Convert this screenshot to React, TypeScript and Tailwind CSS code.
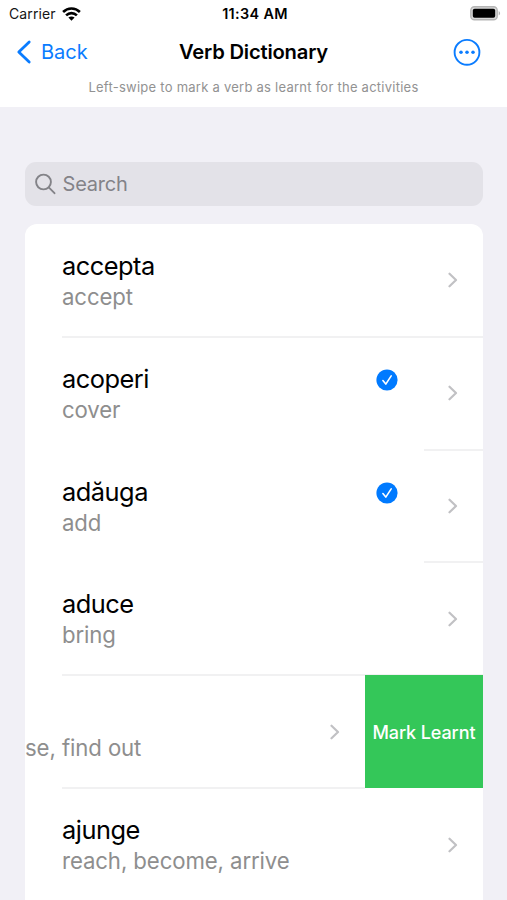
import clsx from 'clsx';

interface Verb {
  infinitive: string;
  meaning: string;
  learnt?: boolean;
  swiped?: boolean;
  divider: 'full' | 'short' | 'none';
}

const verbs: Verb[] = [
  { infinitive: 'accepta', meaning: 'accept', divider: 'full' },
  { infinitive: 'acoperi', meaning: 'cover', learnt: true, divider: 'short' },
  { infinitive: 'adăuga', meaning: 'add', learnt: true, divider: 'short' },
  { infinitive: 'aduce', meaning: 'bring', divider: 'full' },
  { infinitive: '', meaning: 'se, find out', swiped: true, divider: 'full' },
  { infinitive: 'ajunge', meaning: 'reach, become, arrive', divider: 'none' },
];

function WifiIcon() {
  return (
    <svg width="19" height="14" viewBox="0 0 19 14" fill="none" stroke="#000" strokeWidth="2.6">
      <path d="M1.1 5C5.8 .4 13.2 .4 17.9 5" />
      <path d="M4.1 8.4C7.2 5.4 11.8 5.4 14.9 8.4" />
      <path d="M9.5 13.8L6.4 10.6C8.2 9.1 10.8 9.1 12.6 10.6Z" fill="#000" stroke="none" />
    </svg>
  );
}

function BatteryIcon() {
  return (
    <svg width="31" height="15" viewBox="0 0 31 15">
      <rect x=".8" y=".8" width="26.4" height="13" rx="3.6" fill="#d9d9d9" stroke="#b5b5b5" strokeWidth="1.4" />
      <rect x="2.8" y="2.8" width="22.4" height="9" rx="1.8" fill="#000" />
      <path d="M28.7 5.1C30.6 5.9 30.6 8.7 28.7 9.5Z" fill="#b5b5b5" />
    </svg>
  );
}

function Chevron() {
  return (
    <svg width="10" height="16" viewBox="0 0 10 16" fill="none" stroke="#c1c1c4" strokeWidth="2.2" strokeLinecap="round" strokeLinejoin="round">
      <path d="M1.5 1.7L8 8L1.5 14.3" />
    </svg>
  );
}

function LearntBadge() {
  return (
    <svg width="22" height="22" viewBox="0 0 22 22" fill="none">
      <circle cx="11" cy="11" r="10.6" fill="#007aff" />
      <path d="M6.9 11.6L9.8 15.1L15.2 6.9" stroke="#fff" strokeWidth="1.6" strokeLinecap="round" strokeLinejoin="round" />
    </svg>
  );
}

function VerbRow({ verb }: { verb: Verb }) {
  return (
    <div className="flex h-[112.8px] flex-col">
      <div className="flex min-h-0 flex-1">
        <div className={clsx('flex min-w-0 flex-1', !verb.swiped && 'pl-[37px]')}>
          <div className="flex-1 whitespace-nowrap pt-[27px]">
            <div className="h-[31px] text-[25.4px] leading-[30px] tracking-[-0.5px] text-black">{verb.infinitive}</div>
            <div className="h-[30px] text-[22.2px] leading-[30px] tracking-[-0.1px] text-[#8e8e8e]">{verb.meaning}</div>
          </div>
          {verb.learnt && (
            <div className="mr-[50px] mt-[32px]">
              <LearntBadge />
            </div>
          )}
          <div className="flex items-center pr-[25px] pt-px">
            <Chevron />
          </div>
        </div>
        {verb.swiped && (
          <button className="-mb-px flex w-[118px] shrink-0 items-center justify-center whitespace-nowrap bg-[#34c759] pt-px text-[18px] font-medium tracking-[-0.1px] text-white">
            Mark Learnt
          </button>
        )}
      </div>
      {verb.divider !== 'none' && (
        <div
          className={clsx(
            '-mb-px h-[2px] shrink-0 bg-[#f1f1f2]',
            verb.divider === 'full' && 'ml-[37px]',
            verb.divider === 'short' && 'ml-[399px]',
            verb.swiped && 'mr-[118px]'
          )}
        />
      )}
    </div>
  );
}

export default function App() {
  return (
    <div className="flex h-[900px] w-[507px] flex-col overflow-hidden bg-[#f1f0f6] font-['Inter','Liberation_Sans',sans-serif]">
      <header className="flex h-[107px] shrink-0 flex-col bg-white">
        {/* Status bar */}
        <div className="grid h-[27px] grid-cols-[1fr_auto_1fr] items-center pl-[9px] pr-[6px] text-[14px] text-[#151515]">
          <div className="flex items-center gap-[6px]">
            <span className="tracking-[0.1px]">Carrier</span>
            <WifiIcon />
          </div>
          <div className="text-center text-[14.4px] font-semibold tracking-[0.35px] text-black">11:34 AM</div>
          <div className="flex justify-end">
            <BatteryIcon />
          </div>
        </div>

        {/* Navigation bar */}
        <div className="grid h-[50px] grid-cols-[1fr_auto_1fr] items-center px-[16px]">
          <button className="flex items-center gap-[9px] text-[20px] text-[#0a7cff]">
            <svg width="16" height="24" viewBox="0 0 16 24" fill="none" stroke="#0a7cff" strokeWidth="2.8" strokeLinecap="round" strokeLinejoin="round">
              <path d="M13.2 2L2.8 12L13.2 22" />
            </svg>
            <span>Back</span>
          </button>
          <h1 className="pt-px text-[20.2px] font-semibold tracking-[-0.2px] text-black">Verb Dictionary</h1>
          <button className="flex justify-end pr-[10px]" aria-label="More">
            <svg width="28" height="28" viewBox="0 0 28 28" fill="none">
              <circle cx="14" cy="14.3" r="12.4" stroke="#0a7cff" strokeWidth="1.9" />
              <circle cx="8" cy="14.3" r="1.75" fill="#0a7cff" />
              <circle cx="14" cy="14.3" r="1.75" fill="#0a7cff" />
              <circle cx="20" cy="14.3" r="1.75" fill="#0a7cff" />
            </svg>
          </button>
        </div>

        <p className="text-center text-[13px] leading-[20px] tracking-[0.25px] text-[#929292]">
          Left-swipe to mark a verb as learnt for the activities
        </p>
      </header>

      <main className="flex flex-col gap-[18px] pl-[25px] pr-[24px] pt-[55px]">
        <div className="flex h-[44px] items-center gap-[7px] rounded-[11px] bg-[#e3e2e8] pl-[9.5px] text-[20px] tracking-[-0.2px] text-[#838388]">
          <svg width="21" height="22" viewBox="0 0 21 22" fill="none" stroke="#838388" strokeWidth="1.9" strokeLinecap="round">
            <circle cx="8.5" cy="9" r="7.4" />
            <path d="M14 14.6L19.5 20.2" />
          </svg>
          <span>Search</span>
        </div>

        <div className="overflow-hidden rounded-t-[12px] bg-white">
          {verbs.map((verb) => (
            <VerbRow key={verb.meaning} verb={verb} />
          ))}
        </div>
      </main>
    </div>
  );
}
